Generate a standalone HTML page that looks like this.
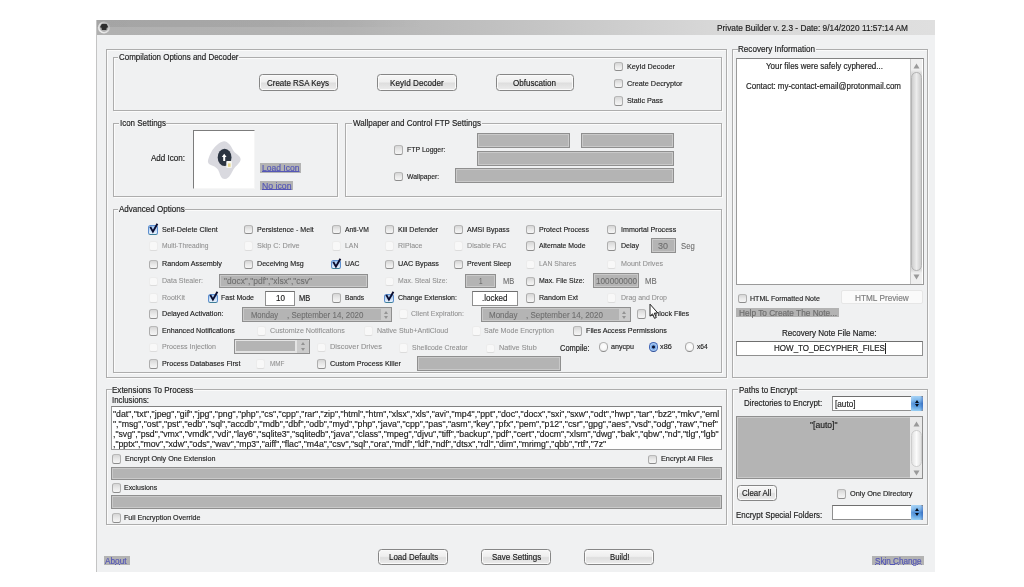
<!DOCTYPE html>
<html lang="en"><head><meta charset="utf-8"><title>Private Builder v. 2.3</title>
<style>
html,body{margin:0;padding:0;background:#fff;}
body{width:1024px;height:587px;position:relative;overflow:hidden;font-family:"Liberation Sans",Arial,sans-serif;color:#1a1a1a;}
div,i,span,svg{position:absolute;box-sizing:border-box;display:block;}
.win{left:96px;top:20px;width:839px;height:552px;background:#f0f1f2;}
.tbar{left:96px;top:20px;width:839px;height:15px;background:linear-gradient(90deg,#b0b0b0 0%,#b3b3b3 30%,#c4c4c4 52%,#d8d8d8 74%,#dfdfdf 100%);}
.tbar2{left:96px;top:20px;width:330px;height:6.5px;background:linear-gradient(90deg,rgba(0,0,0,.065) 0%,rgba(0,0,0,.06) 55%,rgba(0,0,0,0) 100%);}
.lborder{left:95.5px;top:20px;width:1.7px;height:552px;background:#c4c4c4;}
.gb{border:1px solid #adadad;box-shadow:inset 1px 1px 0 #fbfbfb, 1px 1px 0 #fbfbfb;}
.gl{background:#f0f1f2;}
span.t{white-space:pre;transform-origin:0 50%;line-height:12px;height:12px;}
.m{font-size:9.8px;color:#1c1c1c;-webkit-text-stroke-width:0.18px;}
.s{font-size:7.4px;color:#1e1e1e;-webkit-text-stroke-width:0.15px;}
.d{color:#8f8f8f;-webkit-text-stroke-width:0.08px;}
.d2{color:#6d6d6d;-webkit-text-stroke-width:0.1px;}
.d3{color:#7c7c7c;}
.d4{color:#6c6c6c;}
.lnk{color:#5456b6;text-decoration:underline;text-decoration-thickness:0.8px;text-underline-offset:0px;}
.lk{background:#b3b3b3;}
.cb{width:9px;height:9.5px;border:1px solid #adadad;border-top-color:#b9b9b9;border-bottom:1.5px solid #8c8c8c;border-radius:2.5px;background:linear-gradient(180deg,#d6d6d6 0%,#e9e9e9 50%,#f5f5f5 100%);}
.cb.dis{border-color:#ececec;border-bottom:1.5px solid #dcdcdc;background:#f8f8f8;}
.cb.on{width:10px;border-color:#5d8fd0;border-bottom:1.5px solid #3f7f9a;background:linear-gradient(180deg,#9dc2ee 0%,#c5dcf6 55%,#e9f2fc 100%);}
.rb{width:9.4px;height:9.6px;border:1px solid #a6a6a6;border-top-color:#b6b6b6;border-bottom:1.4px solid #8a8a8a;border-radius:50%;background:radial-gradient(circle at 55% 45%,#fff 0%,#f6f6f6 55%,#dcdcdc 100%);}
.rb.on{border:1.2px solid #4266b6;border-bottom:1.4px solid #2f4f9a;background:radial-gradient(circle at 50% 50%,#0a1230 0%,#0a1230 19%,#6f9fe2 36%,#a9ccf4 62%,#7fb0ea 100%);}
.btn{border:1px solid #868686;border-radius:3.5px;background:linear-gradient(180deg,#f7f7f7 0%,#efefef 45%,#dedede 55%,#ececec 100%);box-shadow:inset 0 0 0 1px #fafafa;}
.btn-d{border:1px solid #e6e6e6;border-radius:2px;background:#fafafa;}
.tg{background:#b4b4b4;border:1px solid #8f8f8f;box-shadow:inset 0 0 0 1px #c9c9c9;}
.tw{background:#fff;border:1px solid #8f8f8f;border-top-color:#6f6f6f;}
.ta{background:#fff;border:1px solid #9a9a9a;border-top-color:#828282;}
.pic{background:#fff;border:1px solid #f6f6f6;border-top:1.3px solid #7c7c7c;border-left:1.3px solid #7c7c7c;}
.sb{background:linear-gradient(180deg,#efefef 0,#efefef 11px,#d9d9d9 14px,#d9d9d9 calc(100% - 14px),#efefef calc(100% - 11px),#efefef 100%);border-left:1px solid #c9c9c9;}
.sb2{background:#e9e9e9;}
.thumb{border-radius:5.5px;background:linear-gradient(90deg,#cecece,#ececec 50%,#cccccc);border:1px solid #b4b4b4;}
.t2{background:linear-gradient(90deg,#e2e2e2,#fbfbfb 50%,#e0e0e0);border-color:#cdcdcd;}
.spin{background:#cbcbcb;border-radius:0 1.5px 1.5px 0;}
.spin:before,.spin:after{content:"";position:absolute;left:50%;margin-left:-2.3px;border:2.3px solid transparent;}
.spin:before{top:0.8px;border-bottom:3px solid #939393;}
.spin:after{bottom:-0.1px;border-top:3px solid #939393;}
.combo-d{background:#e4e4e4;border:1px solid #8f8f8f;}
.cf{background:#b4b4b4;}
.dd{background:linear-gradient(90deg,rgba(255,255,255,.15) 0%,rgba(255,255,255,0) 30%,rgba(20,40,140,0) 75%,rgba(20,50,150,.35) 100%),linear-gradient(180deg,#a6d2f5 0%,#7fb8ec 28%,#4f8fd6 50%,#5a9de0 68%,#97cef3 100%);border-radius:0 2.5px 2.5px 0;}
.dd:before,.dd:after{content:"";position:absolute;left:4.3px;border:2px solid transparent;}
.dd:before{top:1.4px;border-bottom:3px solid #07101e;}
.dd:after{bottom:2.2px;border-top:3px solid #07101e;}
.caret{background:#222;}
.abs{position:absolute;}
.wrap{left:0;top:0;width:1024px;height:587px;filter:blur(0.4px);}
</style></head>
<body>
<div class="wrap">
<div class="win"></div>
<div class="tbar"></div>
<div class="tbar2"></div>
<div class="lborder"></div>
<svg class="abs" style="left:96px;top:20px" width="16" height="15" viewBox="96 20 16 15"><defs><linearGradient id="rg" x1="0" y1="1" x2="1" y2="0"><stop offset="0" stop-color="#f4f4f4"/><stop offset="0.55" stop-color="#e0e0e0" stop-opacity="0.85"/><stop offset="1" stop-color="#d0d0d0" stop-opacity="0.15"/></linearGradient></defs><circle cx="104" cy="27.5" r="5.2" fill="none" stroke="url(#rg)" stroke-width="1.6"/><path d="M101.8 24 L106.6 24 L108.2 27.3 L106.7 27.7 L106.4 30 L101.8 30 L101.5 27.7 L100 27.3 Z" fill="#2e2e2e"/></svg>
<span class="t m" style="left:716.5px;top:21.6px;transform:scaleX(0.8482);">Private Builder v. 2.3 - Date: 9/14/2020 11:57:14 AM</span>
<div class="gb" style="left:105.5px;top:49px;width:621.1px;height:328.6px;"></div>
<div class="gb" style="left:112.5px;top:57px;width:609px;height:53.5px;"></div>
<div class="gl" style="left:118.05px;top:52px;width:120.9px;height:10px;"></div>
<span class="t m" style="left:118.75px;top:51.3px;transform:scaleX(0.8125);">Compilation Options and Decoder</span>
<div class="btn" style="left:259px;top:74px;width:78.5px;height:16.5px;"></div>
<span class="t m" style="left:267px;top:76.6px;transform:scaleX(0.8130);">Create RSA Keys</span>
<div class="btn" style="left:377.25px;top:74px;width:79.25px;height:16.5px;"></div>
<span class="t m" style="left:389.75px;top:76.6px;transform:scaleX(0.8292);">KeyId Decoder</span>
<div class="btn" style="left:495.5px;top:74px;width:78.75px;height:16.5px;"></div>
<span class="t m" style="left:513px;top:76.6px;transform:scaleX(0.8222);">Obfuscation</span>
<i class="cb " style="left:614.25px;top:61.95px"></i>
<span class="t s" style="left:627px;top:60.55px;transform:scaleX(0.9806);">KeyId Decoder</span>
<i class="cb " style="left:614.25px;top:78.95px"></i>
<span class="t s" style="left:627px;top:77.55px;transform:scaleX(0.9851);">Create Decryptor</span>
<i class="cb " style="left:614.25px;top:96.2px"></i>
<span class="t s" style="left:627px;top:94.8px;transform:scaleX(0.9726);">Static Pass</span>
<div class="gb" style="left:112.5px;top:122.5px;width:225px;height:74.5px;"></div>
<div class="gl" style="left:118.8px;top:117.5px;width:47.4px;height:10px;"></div>
<span class="t m" style="left:119.5px;top:116.8px;transform:scaleX(0.8119);">Icon Settings</span>
<span class="t m" style="left:150.5px;top:151.5px;transform:scaleX(0.8211);">Add Icon:</span>
<div class="pic" style="left:193px;top:130px;width:61.5px;height:59px;"></div>
<svg class="abs" style="left:200px;top:135px" width="50" height="50" viewBox="200 135 50 50">
<path d="M224 141.2 C227.5 141 231 145.5 233 150 C234.5 153.5 240.8 155.5 240.6 159.5 C240.4 163 236 165.5 233.7 169 C231.5 172.5 229.5 178.8 225 179 C221.5 179.2 220.5 176 219.3 172.5 C218 168.5 215.5 166.5 212 165.5 C208.5 164.5 207.2 162.5 208.2 159.5 C209.3 156.3 210 154 211.6 151.4 C213.5 148 219 141.5 224 141.2 Z" fill="#d9d9df"/>
<ellipse cx="224.6" cy="157.4" rx="6.9" ry="8.6" fill="#2b3441"/>
<path d="M224.2 153.8 L226.6 157 L225.2 157 L225.2 161 L223.2 161 L223.2 157 L221.8 157 Z" fill="#fff"/>
<rect x="226.3" y="161" width="5.6" height="7" rx="0.8" fill="#f6f6f1"/>
<rect x="228" y="163.4" width="2.6" height="3.4" fill="#e6d68c"/>
</svg>
<div class="lk" style="left:260.2px;top:163.1px;width:41.3px;height:9.8px;"></div>
<span class="t m lnk" style="left:262px;top:162.2px;transform:scaleX(0.8711);">Load Icon</span>
<div class="lk" style="left:260.2px;top:181px;width:33.2px;height:9.2px;"></div>
<span class="t m lnk" style="left:262px;top:179.8px;transform:scaleX(0.8878);">No icon</span>
<div class="gb" style="left:344.5px;top:122.5px;width:377px;height:74.5px;"></div>
<div class="gl" style="left:352.3px;top:117.5px;width:129.4px;height:10px;"></div>
<span class="t m" style="left:353px;top:116.8px;transform:scaleX(0.8188);">Wallpaper and Control FTP Settings</span>
<i class="cb " style="left:393.5px;top:145.2px"></i>
<span class="t s" style="left:406.75px;top:143.8px;transform:scaleX(0.9391);">FTP Logger:</span>
<i class="cb " style="left:393.5px;top:171.95px"></i>
<span class="t s" style="left:406.75px;top:170.55px;transform:scaleX(0.9189);">Wallpaper:</span>
<div class="tg" style="left:476.75px;top:133.25px;width:93px;height:15px;"></div>
<div class="tg" style="left:581.25px;top:133.25px;width:93px;height:15px;"></div>
<div class="tg" style="left:476.75px;top:151.25px;width:197.5px;height:14.5px;"></div>
<div class="tg" style="left:454.75px;top:168.25px;width:219.5px;height:15px;"></div>
<div class="gb" style="left:112.5px;top:209px;width:609px;height:163.5px;"></div>
<div class="gl" style="left:118.05px;top:204px;width:67.15px;height:10px;"></div>
<span class="t m" style="left:118.75px;top:203.3px;transform:scaleX(0.8210);">Advanced Options</span>
<i class="cb on" style="left:148.25px;top:225.05px"></i>
<svg class="abs" style="left:148.25px;top:220.95px" width="13" height="14" viewBox="0 0 13 14"><path d="M2.3 5.9 L4.9 10.6 L9.4 2.7" fill="none" stroke="#0b0c2e" stroke-width="1.9" stroke-linejoin="miter"/></svg>
<span class="t s" style="left:161.75px;top:223.55px;transform:scaleX(0.9682);">Self-Delete Client</span>
<i class="cb " style="left:244.25px;top:224.95px"></i>
<span class="t s" style="left:257px;top:223.55px;transform:scaleX(0.9583);">Persistence - Melt</span>
<i class="cb " style="left:331.75px;top:224.95px"></i>
<span class="t s" style="left:345.25px;top:223.55px;transform:scaleX(0.9120);">Anti-VM</span>
<i class="cb " style="left:384.5px;top:224.95px"></i>
<span class="t s" style="left:397.75px;top:223.55px;transform:scaleX(0.9500);">Kill Defender</span>
<i class="cb " style="left:454px;top:224.95px"></i>
<span class="t s" style="left:467.25px;top:223.55px;transform:scaleX(0.9569);">AMSI Bypass</span>
<i class="cb " style="left:526px;top:224.95px"></i>
<span class="t s" style="left:539px;top:223.55px;transform:scaleX(0.9573);">Protect Process</span>
<i class="cb " style="left:607.25px;top:224.95px"></i>
<span class="t s" style="left:620.5px;top:223.55px;transform:scaleX(0.9597);">Immortal Process</span>
<i class="cb dis" style="left:148.75px;top:241.45px"></i>
<span class="t s d" style="left:161.75px;top:240.05px;transform:scaleX(0.9045);">Multi-Threading</span>
<i class="cb dis" style="left:244.25px;top:241.45px"></i>
<span class="t s d" style="left:257px;top:240.05px;transform:scaleX(0.9901);">Skip C: Drive</span>
<i class="cb dis" style="left:331.75px;top:241.45px"></i>
<span class="t s d" style="left:345.25px;top:240.05px;transform:scaleX(0.9378);">LAN</span>
<i class="cb dis" style="left:384.5px;top:241.45px"></i>
<span class="t s d" style="left:397.75px;top:240.05px;transform:scaleX(0.9455);">RIPlace</span>
<i class="cb dis" style="left:454px;top:241.45px"></i>
<span class="t s d" style="left:467.25px;top:240.05px;transform:scaleX(0.9604);">Disable FAC</span>
<i class="cb " style="left:526px;top:241.45px"></i>
<span class="t s" style="left:539px;top:240.05px;transform:scaleX(0.9266);">Alternate Mode</span>
<i class="cb " style="left:607.25px;top:241.45px"></i>
<span class="t s" style="left:620.5px;top:240.05px;transform:scaleX(0.9514);">Delay</span>
<div class="tg" style="left:650.75px;top:238px;width:24.75px;height:15.25px;"></div>
<span class="t m d2" style="left:658px;top:239.9px;transform:scaleX(0.9173);">30</span>
<span class="t m d2" style="left:680.75px;top:240.2px;transform:scaleX(0.7885);">Seg</span>
<i class="cb " style="left:148.75px;top:259.7px"></i>
<span class="t s" style="left:161.75px;top:258.3px;transform:scaleX(0.9725);">Random Assembly</span>
<i class="cb " style="left:244.25px;top:259.7px"></i>
<span class="t s" style="left:257px;top:258.3px;transform:scaleX(0.9633);">Deceiving Msg</span>
<i class="cb on" style="left:331.25px;top:259.8px"></i>
<svg class="abs" style="left:331.25px;top:255.7px" width="13" height="14" viewBox="0 0 13 14"><path d="M2.3 5.9 L4.9 10.6 L9.4 2.7" fill="none" stroke="#0b0c2e" stroke-width="1.9" stroke-linejoin="miter"/></svg>
<span class="t s" style="left:345.25px;top:258.3px;transform:scaleX(0.9280);">UAC</span>
<i class="cb " style="left:384.5px;top:259.7px"></i>
<span class="t s" style="left:397.75px;top:258.3px;transform:scaleX(0.9774);">UAC Bypass</span>
<i class="cb " style="left:454px;top:259.7px"></i>
<span class="t s" style="left:467.25px;top:258.3px;transform:scaleX(0.9519);">Prevent Sleep</span>
<i class="cb dis" style="left:526px;top:259.7px"></i>
<span class="t s d" style="left:539px;top:258.3px;transform:scaleX(0.9336);">LAN Shares</span>
<i class="cb dis" style="left:607.25px;top:259.7px"></i>
<span class="t s d" style="left:620.5px;top:258.3px;transform:scaleX(0.9635);">Mount Drives</span>
<i class="cb dis" style="left:148.75px;top:276.7px"></i>
<span class="t s d" style="left:161.75px;top:275.3px;transform:scaleX(0.9493);">Data Stealer:</span>
<div class="tg" style="left:219.25px;top:274px;width:148.5px;height:14.25px;"></div>
<span class="t m d2" style="left:224px;top:275.3px;transform:scaleX(0.8636);">"docx","pdf","xlsx","csv"</span>
<i class="cb dis" style="left:384.5px;top:276.7px"></i>
<span class="t s d" style="left:397.75px;top:275.3px;transform:scaleX(0.9258);">Max. Steal Size:</span>
<div class="tg" style="left:465.25px;top:274px;width:30.25px;height:14.25px;"></div>
<span class="t m d2" style="left:478.5px;top:275.3px;transform:scaleX(0.6420);">1</span>
<span class="t m d2" style="left:503px;top:275.3px;transform:scaleX(0.7653);">MB</span>
<i class="cb " style="left:526px;top:276.7px"></i>
<span class="t s" style="left:539px;top:275.3px;transform:scaleX(0.9377);">Max. File Size:</span>
<div class="tg" style="left:593.25px;top:273.25px;width:46px;height:14.75px;"></div>
<span class="t m d2" style="left:595.5px;top:274.9px;transform:scaleX(0.8358);">100000000</span>
<span class="t m d2" style="left:644.5px;top:274.5px;transform:scaleX(0.7993);">MB</span>
<i class="cb dis" style="left:148.75px;top:293.45px"></i>
<span class="t s d" style="left:161.75px;top:292.05px;transform:scaleX(0.9478);">RootKit</span>
<i class="cb on" style="left:207.5px;top:293.55px"></i>
<svg class="abs" style="left:207.5px;top:289.45px" width="13" height="14" viewBox="0 0 13 14"><path d="M2.3 5.9 L4.9 10.6 L9.4 2.7" fill="none" stroke="#0b0c2e" stroke-width="1.9" stroke-linejoin="miter"/></svg>
<span class="t s" style="left:220.75px;top:292.05px;transform:scaleX(0.9440);">Fast Mode</span>
<div class="tw" style="left:264.5px;top:290.5px;width:30px;height:15px;"></div>
<span class="t m" style="left:275.5px;top:292.2px;transform:scaleX(0.8256);">10</span>
<span class="t m" style="left:298.75px;top:292.2px;transform:scaleX(0.7653);">MB</span>
<i class="cb " style="left:331.75px;top:293.45px"></i>
<span class="t s" style="left:345.25px;top:292.05px;transform:scaleX(0.9055);">Bands</span>
<i class="cb on" style="left:384px;top:293.55px"></i>
<svg class="abs" style="left:384px;top:289.45px" width="13" height="14" viewBox="0 0 13 14"><path d="M2.3 5.9 L4.9 10.6 L9.4 2.7" fill="none" stroke="#0b0c2e" stroke-width="1.9" stroke-linejoin="miter"/></svg>
<span class="t s" style="left:397.75px;top:292.05px;transform:scaleX(0.9435);">Change Extension:</span>
<div class="tw" style="left:471.75px;top:290.5px;width:46px;height:15px;"></div>
<span class="t m" style="left:481.75px;top:292.2px;transform:scaleX(0.8212);">.locked</span>
<i class="cb " style="left:526px;top:293.45px"></i>
<span class="t s" style="left:539px;top:292.05px;transform:scaleX(0.9578);">Random Ext</span>
<i class="cb dis" style="left:607.25px;top:293.45px"></i>
<span class="t s d" style="left:620.5px;top:292.05px;transform:scaleX(0.9477);">Drag and Drop</span>
<i class="cb " style="left:148.75px;top:309.2px"></i>
<span class="t s" style="left:161.75px;top:307.8px;transform:scaleX(0.9772);">Delayed Activation:</span>
<div class="tg" style="left:241.75px;top:307.25px;width:150.5px;height:14.75px;"></div>
<span class="t m d2" style="left:250.5px;top:308.9px;transform:scaleX(0.7801);">Monday</span>
<span class="t m d2" style="left:287.4px;top:308.9px;transform:scaleX(0.8106);">, September 14, 2020</span>
<div class="spin" style="left:380.9px;top:308.3px;width:10.5px;height:12.6px;"></div>
<i class="cb dis" style="left:398.5px;top:309.2px"></i>
<span class="t s d" style="left:411px;top:307.8px;transform:scaleX(0.9475);">Client Expiration:</span>
<div class="tg" style="left:480.5px;top:307.25px;width:150.25px;height:14.75px;"></div>
<span class="t m d2" style="left:488.75px;top:308.9px;transform:scaleX(0.8174);">Monday</span>
<span class="t m d2" style="left:525.75px;top:308.9px;transform:scaleX(0.8169);">, September 14, 2020</span>
<div class="spin" style="left:619.4px;top:308.3px;width:10.5px;height:12.6px;"></div>
<i class="cb " style="left:636.75px;top:309.45px"></i>
<span class="t s" style="left:649.5px;top:308.05px;transform:scaleX(0.9739);">Unlock Files</span>
<i class="cb " style="left:148.75px;top:326.45px"></i>
<span class="t s" style="left:161.75px;top:325.05px;transform:scaleX(0.9644);">Enhanced Notifications</span>
<i class="cb dis" style="left:256.75px;top:326.45px"></i>
<span class="t s d" style="left:269.5px;top:325.05px;transform:scaleX(0.9700);">Customize Notifications</span>
<i class="cb dis" style="left:364px;top:326.45px"></i>
<span class="t s d" style="left:376.75px;top:325.05px;transform:scaleX(0.9543);">Native Stub+AntiCloud</span>
<i class="cb dis" style="left:471.5px;top:326.45px"></i>
<span class="t s d" style="left:484px;top:325.05px;transform:scaleX(0.9614);">Safe Mode Encryption</span>
<i class="cb " style="left:572.5px;top:326.45px"></i>
<span class="t s" style="left:585.75px;top:325.05px;transform:scaleX(0.9703);">Files Access Permissions</span>
<i class="cb dis" style="left:148.75px;top:342.7px"></i>
<span class="t s d" style="left:161.75px;top:340.8px;transform:scaleX(0.9583);">Process Injection</span>
<div class="combo-d" style="left:233.75px;top:338.5px;width:76.45px;height:15.1px;"></div>
<div class="cf" style="left:235.9px;top:340.8px;width:59.6px;height:10.6px;"></div>
<div class="spin" style="left:296.8px;top:339.5px;width:12.4px;height:13.1px;"></div>
<i class="cb dis" style="left:316.75px;top:342.7px"></i>
<span class="t s d" style="left:329.5px;top:340.8px;transform:scaleX(1.0037);">Discover Drives</span>
<i class="cb dis" style="left:399px;top:343.2px"></i>
<span class="t s d" style="left:411.5px;top:341.55px;transform:scaleX(0.9412);">Shellcode Creator</span>
<i class="cb dis" style="left:486px;top:343.7px"></i>
<span class="t s d" style="left:499px;top:342.05px;transform:scaleX(0.9868);">Native Stub</span>
<span class="t m" style="left:560px;top:341.5px;transform:scaleX(0.7629);">Compile:</span>
<i class="rb " style="left:598.75px;top:342.4px"></i>
<span class="t s" style="left:610.75px;top:340.8px;transform:scaleX(0.9639);">anycpu</span>
<i class="rb on" style="left:648.5px;top:342.4px"></i>
<span class="t s" style="left:660px;top:340.8px;transform:scaleX(0.9848);">x86</span>
<i class="rb " style="left:684.75px;top:342.4px"></i>
<span class="t s" style="left:696.75px;top:340.8px;transform:scaleX(0.9010);">x64</span>
<i class="cb " style="left:148.75px;top:359.45px"></i>
<span class="t s" style="left:161.75px;top:358.05px;transform:scaleX(0.9739);">Process Databases First</span>
<i class="cb dis" style="left:256px;top:359.45px"></i>
<span class="t s d" style="left:269.5px;top:358.05px;transform:scaleX(0.8605);">MMF</span>
<i class="cb " style="left:316.75px;top:359.45px"></i>
<span class="t s" style="left:329.5px;top:358.05px;transform:scaleX(0.9755);">Custom Process Killer</span>
<div class="tg" style="left:417.25px;top:356.25px;width:143.25px;height:15px;"></div>
<svg class="abs" style="left:649.3px;top:302.7px" width="12" height="18" viewBox="0 0 12 18"><path d="M1 1.2 L1 13.2 L3.5 10.9 L5.5 15.3 L7.3 14.5 L5.3 10.2 L8.7 9.9 Z" fill="#fff" stroke="#151515" stroke-width="0.95"/></svg>
<div class="gb" style="left:732px;top:49px;width:195.5px;height:328.6px;"></div>
<div class="gl" style="left:737.55px;top:44px;width:78.4px;height:10px;"></div>
<span class="t m" style="left:738.25px;top:43.3px;transform:scaleX(0.8267);">Recovery Information</span>
<div class="ta" style="left:736px;top:58.25px;width:187.5px;height:226.25px;"></div>
<span class="t m" style="left:765.5px;top:60.25px;transform:scaleX(0.8156);">Your files were safely cyphered...</span>
<span class="t m" style="left:745.5px;top:79.75px;transform:scaleX(0.8125);">Contact: my-contact-email@protonmail.com</span>
<div class="sb" style="left:909.8px;top:59.25px;width:12.7px;height:224.25px;"></div>
<div class="thumb" style="left:910.8px;top:71.5px;width:11px;height:199.5px;"></div>
<svg class="abs" style="left:912.5px;top:62.5px" width="7" height="6" viewBox="0 0 7 6"><path d="M3.5 0.5 L6.5 5.5 L0.5 5.5 Z" fill="#9a9a9a"/></svg>
<svg class="abs" style="left:912.5px;top:274px" width="7" height="6" viewBox="0 0 7 6"><path d="M3.5 5.5 L6.5 0.5 L0.5 0.5 Z" fill="#9a9a9a"/></svg>
<i class="cb " style="left:737.5px;top:293.95px"></i>
<span class="t s" style="left:750px;top:292.55px;transform:scaleX(0.9545);">HTML Formatted Note</span>
<div class="btn-d" style="left:841.25px;top:289.5px;width:81.75px;height:14.75px;"></div>
<span class="t m d3" style="left:855px;top:291.6px;transform:scaleX(0.8413);">HTML Preview</span>
<div class="lk" style="left:736.25px;top:307.5px;width:103px;height:9.75px;"></div>
<span class="t m d4" style="left:738.5px;top:306.6px;transform:scaleX(0.8433);">Help To Create The Note...</span>
<span class="t m" style="left:781.75px;top:327px;transform:scaleX(0.8223);">Recovery Note File Name:</span>
<div class="tw" style="left:736.25px;top:340.5px;width:187px;height:15px;"></div>
<span class="t m" style="left:773.75px;top:342.2px;transform:scaleX(0.8197);">HOW_TO_DECYPHER_FILES</span>
<div class="caret" style="left:885.3px;top:342.5px;width:0.8px;height:11px;"></div>
<div class="gb" style="left:105.5px;top:389.4px;width:621.1px;height:135.6px;"></div>
<div class="gl" style="left:111.55px;top:384.4px;width:82.65px;height:10px;"></div>
<span class="t m" style="left:112.25px;top:383.7px;transform:scaleX(0.8211);">Extensions To Process</span>
<span class="t m" style="left:112.25px;top:393.5px;transform:scaleX(0.7991);">Inclusions:</span>
<div class="ta" style="left:110.5px;top:406.25px;width:611.5px;height:43.75px;"></div>
<span class="t m" style="left:113px;top:407.9px;transform:scaleX(0.8913);">"dat","txt","jpeg","gif","jpg","png","php","cs","cpp","rar","zip","html","htm","xlsx","xls","avi","mp4","ppt","doc","docx","sxi","sxw","odt","hwp","tar","bz2","mkv","eml</span>
<span class="t m" style="left:113px;top:418.1px;transform:scaleX(0.8939);">","msg","ost","pst","edb","sql","accdb","mdb","dbf","odb","myd","php","java","cpp","pas","asm","key","pfx","pem","p12","csr","gpg","aes","vsd","odg","raw","nef"</span>
<span class="t m" style="left:113px;top:428.2px;transform:scaleX(0.8881);">,"svg","psd","vmx","vmdk","vdi","lay6","sqlite3","sqlitedb","java","class","mpeg","djvu","tiff","backup","pdf","cert","docm","xlsm","dwg","bak","qbw","nd","tlg","lgb"</span>
<span class="t m" style="left:113px;top:438.3px;transform:scaleX(0.8873);">,"pptx","mov","xdw","ods","wav","mp3","aiff","flac","m4a","csv","sql","ora","mdf","ldf","ndf","dtsx","rdl","dim","mrimg","qbb","rtf","7z"</span>
<i class="cb " style="left:112px;top:454.45px"></i>
<span class="t s" style="left:124.75px;top:452.8px;transform:scaleX(0.9736);">Encrypt Only One Extension</span>
<i class="cb " style="left:647.5px;top:454.95px"></i>
<span class="t s" style="left:660.5px;top:453.3px;transform:scaleX(0.9879);">Encrypt All Files</span>
<div class="tg" style="left:110.5px;top:467px;width:611.5px;height:12.5px;"></div>
<i class="cb " style="left:112px;top:483.2px"></i>
<span class="t s" style="left:124px;top:481.55px;transform:scaleX(0.9400);">Exclusions</span>
<div class="tg" style="left:110.5px;top:495px;width:611.5px;height:14.25px;"></div>
<i class="cb " style="left:112px;top:513.2px"></i>
<span class="t s" style="left:124px;top:511.55px;transform:scaleX(0.9638);">Full Encryption Override</span>
<div class="gb" style="left:732px;top:389.4px;width:195.5px;height:135.6px;"></div>
<div class="gl" style="left:738.05px;top:384.4px;width:59.65px;height:10px;"></div>
<span class="t m" style="left:738.75px;top:383.7px;transform:scaleX(0.8101);">Paths to Encrypt</span>
<span class="t m" style="left:743.75px;top:397.25px;transform:scaleX(0.8117);">Directories to Encrypt:</span>
<div class="tw" style="left:831.75px;top:396.25px;width:91.25px;height:14.75px;"></div>
<span class="t m" style="left:834.5px;top:397.9px;transform:scaleX(0.8360);">[auto]</span>
<div class="dd" style="left:910.7px;top:396.25px;width:12.5px;height:14.75px;"></div>
<div class="tg" style="left:736.25px;top:416.25px;width:187px;height:63px;"></div>
<span class="t m" style="left:810px;top:418.5px;transform:scaleX(0.8736);">"[auto]"</span>
<div class="sb2" style="left:910px;top:417.25px;width:12.25px;height:61px;"></div>
<div class="thumb t2" style="left:911.3px;top:430px;width:10.3px;height:36.5px;"></div>
<svg class="abs" style="left:912.5px;top:421px" width="7" height="6" viewBox="0 0 7 6"><path d="M3.5 0.5 L6.5 5.5 L0.5 5.5 Z" fill="#9a9a9a"/></svg>
<svg class="abs" style="left:912.5px;top:469.5px" width="7" height="6" viewBox="0 0 7 6"><path d="M3.5 5.5 L6.5 0.5 L0.5 0.5 Z" fill="#9a9a9a"/></svg>
<div class="btn" style="left:737px;top:485px;width:40px;height:15.5px;"></div>
<span class="t m" style="left:742px;top:487.1px;transform:scaleX(0.8015);">Clear All</span>
<i class="cb " style="left:837.25px;top:489.45px"></i>
<span class="t s" style="left:849.5px;top:487.55px;transform:scaleX(0.9933);">Only One Directory</span>
<span class="t m" style="left:736.25px;top:508.5px;transform:scaleX(0.8121);">Encrypt Special Folders:</span>
<div class="tw" style="left:831.75px;top:505px;width:91.25px;height:15px;"></div>
<div class="dd" style="left:910.7px;top:505px;width:12.5px;height:15px;"></div>
<div class="lk" style="left:103.5px;top:555.7px;width:26.1px;height:9.2px;"></div>
<span class="t m lnk" style="left:105px;top:554.5px;transform:scaleX(0.8395);">About</span>
<div class="lk" style="left:872px;top:555.7px;width:51.5px;height:9.2px;"></div>
<span class="t m lnk" style="left:874.5px;top:554.5px;transform:scaleX(0.8286);">Skin Change</span>
<div class="btn" style="left:378px;top:549px;width:70px;height:15.5px;"></div>
<span class="t m" style="left:388.75px;top:551.1px;transform:scaleX(0.8144);">Load Defaults</span>
<div class="btn" style="left:481.25px;top:549px;width:70px;height:15.5px;"></div>
<span class="t m" style="left:492px;top:551.1px;transform:scaleX(0.8144);">Save Settings</span>
<div class="btn" style="left:584.4px;top:549px;width:70px;height:15.5px;"></div>
<span class="t m" style="left:610px;top:551.1px;transform:scaleX(0.7913);">Build!</span>
</div>
</body></html>
